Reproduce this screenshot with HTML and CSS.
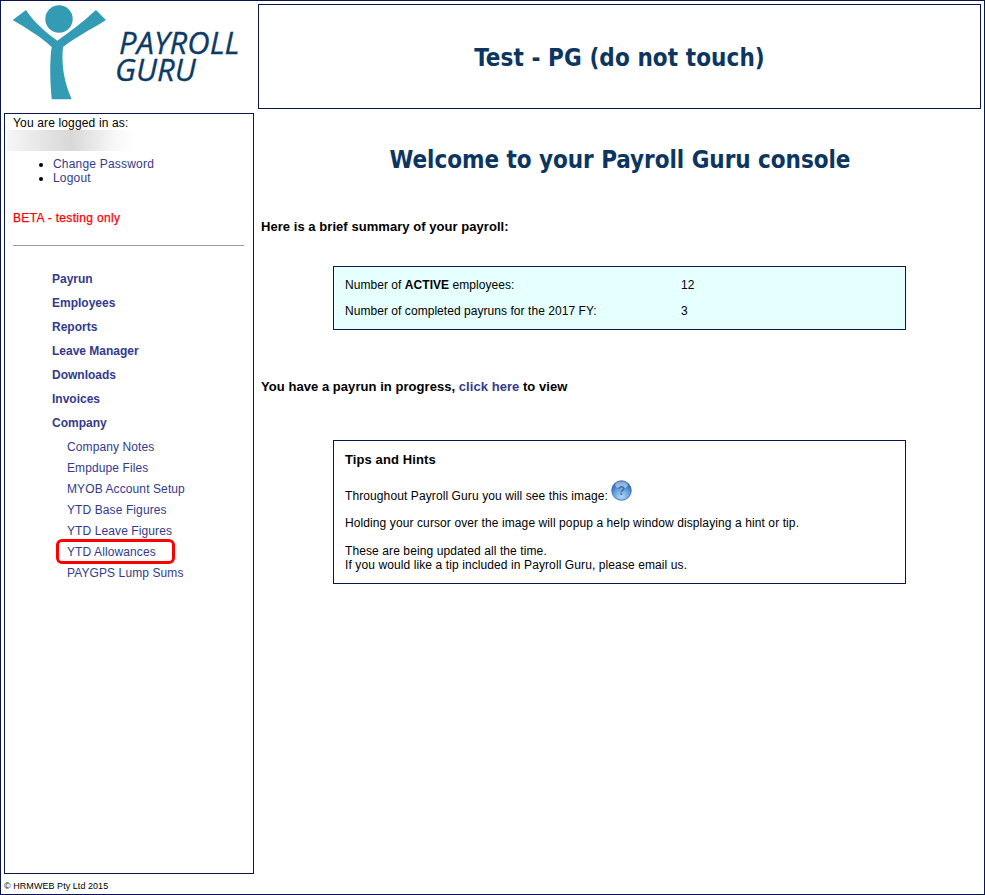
FILE: index.html
```html
<!DOCTYPE html>
<html lang="en">
<head>
<meta charset="utf-8">
<title>Payroll Guru</title>
<link rel="stylesheet" href="styles.css">
</head>
<body>
<div class="frame">
  <header class="top">
    <div class="logo">
      <svg class="logo-mark" width="95" height="97" viewBox="0 0 95 97">
        <circle cx="47" cy="15" r="13.700" fill="#339cb4"/>
        <path fill="#339cb4" d="M0.700 16 L14 6 C22 18 33 28 45.300 36.700 C58 28 72 17 84 6 L94 16 C78 26 62 34 51 43 C49.500 58 51 76 59.700 95.300 L39.700 95.300 C38 76 37.500 58 39.700 43 C28 32 14 24 0.700 16 Z"/>
      </svg>
      <div class="logo-text"><span class="logo-l1">PAYROLL</span><span class="logo-l2">GURU</span></div>
    </div>
    <div class="title-box"><h1 class="title">Test - PG (do not touch)</h1></div>
  </header>
  <div class="middle">
    <aside class="side">
      <p class="logged">You are logged in as:</p>
      <div class="blur"></div>
      <ul class="acct">
        <li><a href="#">Change Password</a></li>
        <li><a href="#">Logout</a></li>
      </ul>
      <p class="beta">BETA - testing only</p>
      <hr class="rule">
      <nav class="nav">
        <a class="nav-main" href="#">Payrun</a>
        <a class="nav-main" href="#">Employees</a>
        <a class="nav-main" href="#">Reports</a>
        <a class="nav-main" href="#">Leave Manager</a>
        <a class="nav-main" href="#">Downloads</a>
        <a class="nav-main" href="#">Invoices</a>
        <a class="nav-main" href="#">Company</a>
        <div class="sub">
          <a href="#">Company Notes</a>
          <a href="#">Empdupe Files</a>
          <a href="#">MYOB Account Setup</a>
          <a href="#">YTD Base Figures</a>
          <a href="#">YTD Leave Figures</a>
          <a class="marked" href="#">YTD Allowances</a>
          <a href="#">PAYGPS Lump Sums</a>
        </div>
      </nav>
    </aside>
    <main class="main">
      <h2 class="welcome">Welcome to your Payroll Guru console</h2>
      <p class="lead">Here is a brief summary of your payroll:</p>
      <div class="stats">
        <div class="stat"><span class="stat-k">Number of <b>ACTIVE</b> employees:</span><span>12</span></div>
        <div class="stat"><span class="stat-k">Number of completed payruns for the 2017 FY:</span><span>3</span></div>
      </div>
      <p class="progress">You have a payrun in progress, <a href="#">click here</a> to view</p>
      <div class="tips">
        <h3 class="tips-h">Tips and Hints</h3>
        <p class="tips-img">Throughout Payroll Guru you will see this image:
          <svg class="help" width="21" height="21" viewBox="0 0 21 21">
            <defs>
              <radialGradient id="hg" cx="50%" cy="80%" r="70%">
                <stop offset="0" stop-color="#b4d9f6"/>
                <stop offset="0.6" stop-color="#5f9ddf"/>
                <stop offset="1" stop-color="#2f62ad"/>
              </radialGradient>
            </defs>
            <circle cx="10.500" cy="10.500" r="9.800" fill="url(#hg)" stroke="#3a6cb0" stroke-width="0.800"/>
            <ellipse cx="10.500" cy="5" rx="6.500" ry="3.500" fill="#fff" opacity="0.450"/>
            <text x="10.500" y="14.500" class="help-q">?</text>
          </svg>
        </p>
        <p class="tips-p">Holding your cursor over the image will popup a help window displaying a hint or tip.</p>
        <p class="tips-p">These are being updated all the time.<br>If you would like a tip included in Payroll Guru, please email us.</p>
      </div>
    </main>
  </div>
  <footer class="foot">© HRMWEB Pty Ltd 2015</footer>
</div>
</body>
</html>
```
FILE: styles.css
```css
* { box-sizing: border-box; }
html, body { margin: 0; padding: 0; background: #fff; }
body { font-family: "Liberation Sans", Arial, sans-serif; font-size: 12px; color: #000; }
a { color: #333a8c; text-decoration: none; }
.frame { width: 985px; height: 895px; border: 1px solid #0b1550; padding: 3px 3px 0 3px; display: flex; flex-direction: column; }
.top { display: flex; height: 105px; }
.logo { width: 254px; display: flex; padding: 0 0 0 8px; }
.logo-mark { flex: none; }
.logo-text { font-family: "Open Sans", sans-serif; font-style: italic; color: #0d3a66; font-size: 31px; line-height: 27px; display: flex; flex-direction: column; margin: 25px 0 0 8px; -webkit-text-stroke: 0.3px #0d3a66; }
.logo-l1 { padding-left: 4px; }
.title-box { flex: 1; border: 1px solid #0b1550; display: flex; align-items: center; justify-content: center; padding-top: 2px; }
.title { margin: 0; font-family: "DejaVu Sans Condensed", "DejaVu Sans", sans-serif; font-stretch: condensed; font-size: 24px; font-weight: bold; color: #0c3661; letter-spacing: 0.08px; }
.middle { display: flex; margin-top: 4px; height: 761px; }
.side { width: 250px; border: 1px solid #0b1550; padding: 0 8px; letter-spacing: 0.15px; }
.logged { margin: 2px 0 0; line-height: 14px; }
.blur { height: 21px; margin: 0 0 0 -6px; width: 128px; background: linear-gradient(90deg, #f6f6f6, #d8d8d8 50%, #f8f8f8 85%, #fff); }
.acct { margin: 6px 0 0; padding: 0 0 0 40px; line-height: 14px; letter-spacing: 0.2px; }
.beta { margin: 26px 0 0; line-height: 14px; color: #f00; letter-spacing: 0.32px; -webkit-text-stroke: 0.25px #f00; }
.rule { margin: 20px 1px 0 0; border: 0; border-top: 1px solid #999; }
.nav { display: flex; flex-direction: column; margin: 26px 0 0 39px; }
.nav-main { font-weight: bold; line-height: 14px; margin-bottom: 10px; letter-spacing: 0; }
.sub { display: flex; flex-direction: column; gap: 7px; padding-left: 15px; letter-spacing: 0.1px; }
.sub a { line-height: 14px; position: relative; }
.marked::after { content: ""; position: absolute; left: -11px; top: -6px; width: 113px; height: 19px; border: 3px solid #f00; border-radius: 6px; }
.main { flex: 1; padding: 0 0 0 7px; letter-spacing: 0.05px; }
.welcome { margin: 32px 0 0; padding-right: 2px; text-align: center; font-family: "DejaVu Sans Condensed", "DejaVu Sans", sans-serif; font-stretch: condensed; font-size: 24px; line-height: 30px; color: #0c3661; letter-spacing: -0.05px; }
.lead { margin: 44px 0 0; font-size: 13px; font-weight: bold; line-height: 16px; }
.stats { margin: 31px 0 0 72px; width: 573px; height: 64px; background: #e6ffff; border: 1px solid #0b1550; padding: 5px 11px; }
.stat { display: flex; line-height: 26px; }
.stat-k { width: 336px; }
.progress { margin: 49px 0 0; font-size: 13px; font-weight: bold; line-height: 16px; }
.tips { margin: 45px 0 0 72px; width: 573px; height: 144px; border: 1px solid #0b1550; padding: 11px 11px; letter-spacing: 0.1px; }
.tips-h { margin: 0; font-size: 13px; line-height: 16px; }
.tips-img { margin: 17px 0 0; line-height: 22px; display: flex; align-items: center; gap: 3px; }
.help { margin-top: -12px; }
.help-q { font: bold 12px "Liberation Sans", sans-serif; fill: #3f6ea8; text-anchor: middle; }
.tips-p { margin: 14px 0 0; line-height: 14px; }
.tips-img + .tips-p { margin-top: 9px; }
.foot { font-size: 9px; letter-spacing: 0.05px; height: 20px; padding: 6px 0 0 0; line-height: 12px; }
```
